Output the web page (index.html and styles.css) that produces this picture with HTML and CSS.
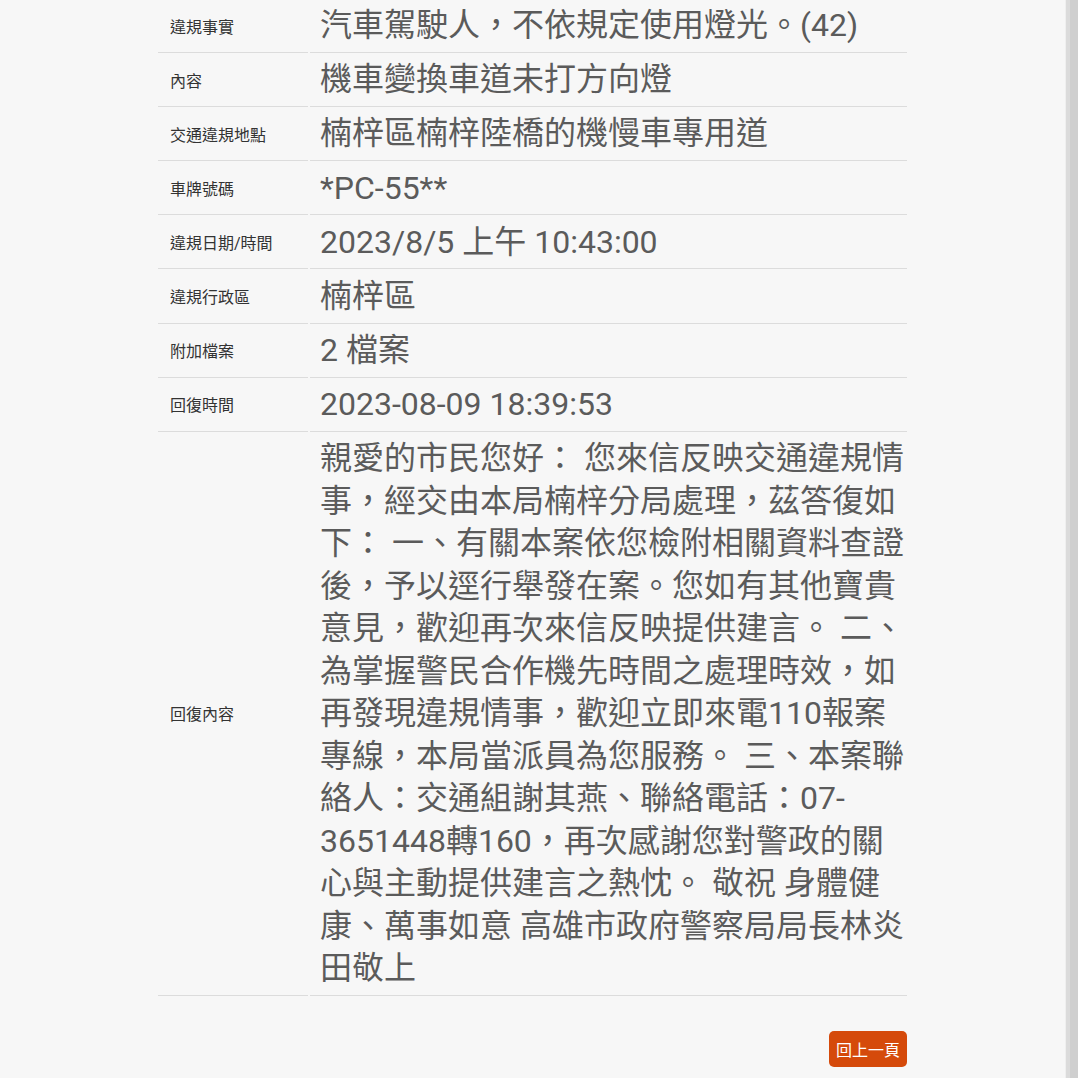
FILE: index.html
```html
<!DOCTYPE html>
<html lang="zh-Hant">
<head>
<meta charset="utf-8">
<title>案件回復</title>
<link rel="stylesheet" href="styles.css">
</head>
<body>
<div class="page">
  <main class="content">
    <div class="detail">
      <div class="label">違規事實</div>
      <div class="value">汽車駕駛人，不依規定使用燈光。(42)</div>

      <div class="label">內容</div>
      <div class="value">機車變換車道未打方向燈</div>

      <div class="label">交通違規地點</div>
      <div class="value">楠梓區楠梓陸橋的機慢車專用道</div>

      <div class="label">車牌號碼</div>
      <div class="value">*PC-55**</div>

      <div class="label">違規日期/時間</div>
      <div class="value">2023/8/5 上午 10:43:00</div>

      <div class="label">違規行政區</div>
      <div class="value">楠梓區</div>

      <div class="label">附加檔案</div>
      <div class="value">2 檔案</div>

      <div class="label">回復時間</div>
      <div class="value">2023-08-09 18:39:53</div>

      <div class="label">回復內容</div>
      <div class="value reply">親愛的市民您好： 您來信反映交通違規情<br>事，經交由本局楠梓分局處理，茲答復如<br>下： 一、有關本案依您檢附相關資料查證<br>後，予以逕行舉發在案。您如有其他寶貴<br>意見，歡迎再次來信反映提供建言。 二、<br>為掌握警民合作機先時間之處理時效，如<br>再發現違規情事，歡迎立即來電110報案<br>專線，本局當派員為您服務。 三、本案聯<br>絡人：交通組謝其燕、聯絡電話：07-<br>3651448轉160，再次感謝您對警政的關<br>心與主動提供建言之熱忱。 敬祝 身體健<br>康、萬事如意 高雄市政府警察局局長林炎<br>田敬上</div>
    </div>
    <div class="actions">
      <button class="back-btn" type="button">回上一頁</button>
    </div>
  </main>
  <div class="scrollbar"></div>
</div>
</body>
</html>
```
FILE: styles.css
```css
html, body {
  margin: 0;
  padding: 0;
  background: #f7f7f7;
  height: 100%;
  overflow: hidden;
}

.page {
  display: flex;
  height: 1078px;
}

.content {
  flex: 1;
  padding-left: 158px;
}

.detail {
  width: 749px;
  display: grid;
  grid-template-columns: 152px 597px;
  margin-top: -1px;
  font-family: Roboto, "Noto Sans CJK TC", sans-serif;
}

.label {
  display: flex;
  align-items: center;
  padding-left: 12px;
  font-size: 16px;
  color: #333333;
  border-bottom: 1px solid #dcdcdc;
  margin-right: 2px;
}

.value {
  padding: 5.3px 0 5.3px 10px;
  font-size: 32px;
  line-height: 42.5px;
  color: #5b5b5b;
  border-bottom: 1px solid #dcdcdc;
  white-space: nowrap;
}

.actions {
  width: 749px;
  display: flex;
  justify-content: flex-end;
  margin-top: 35px;
}

.back-btn {
  font-family: "Noto Sans CJK TC", sans-serif;
  font-size: 16px;
  line-height: 20px;
  color: #ffffff;
  background: #d54a0b;
  border: none;
  border-radius: 5px;
  padding: 8px 7px;
  height: 36px;
  width: 78px;
}

.scrollbar {
  width: 8px;
  border-left: 4px solid #dbdbdb;
  background: #cfcfcf;
  box-shadow: -1px 0 0 #efefef;
}
```
